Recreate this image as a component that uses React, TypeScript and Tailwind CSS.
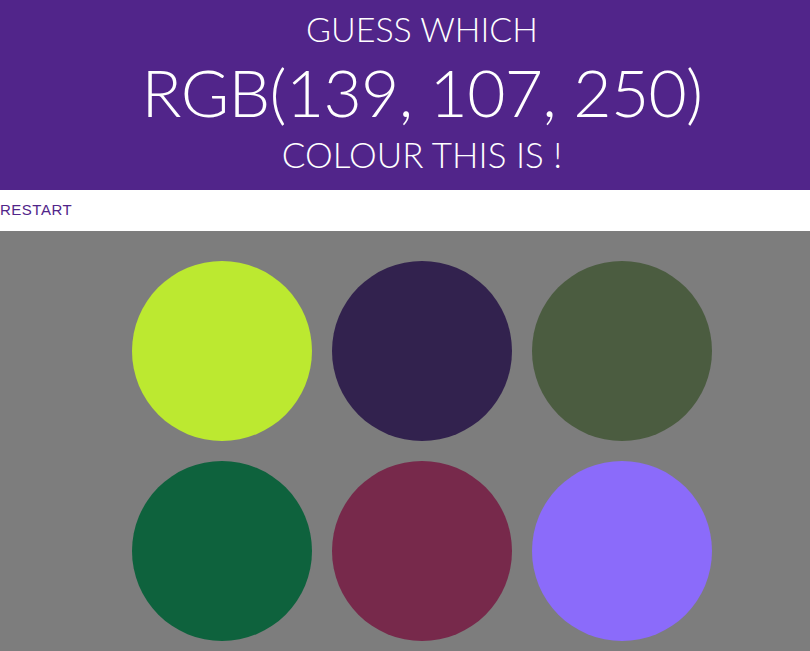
const colours = ['#bce930', '#32224e', '#4b5c40', '#0e623d', '#77294b', '#8b6bfa'];

export default function App() {
  return (
    <div className="min-h-screen bg-[#7d7d7d]">
      <header className="bg-[#51258a] h-[190px] pl-[34px] flex flex-col items-center text-white font-['Lato',sans-serif] font-light">
        <h2 className="text-[34px] leading-none mt-[12px]">GUESS WHICH</h2>
        <h1 className="text-[66px] leading-none mt-[13px] tracking-[-0.7px]">RGB(139, 107, 250)</h1>
        <h2 className="text-[35px] leading-none mt-[12px]">COLOUR THIS IS !</h2>
      </header>
      <div className="bg-white h-[41px] flex items-center">
        <button className="text-[#51258a] text-[15px] font-['Liberation_Sans',sans-serif] tracking-[0.5px] px-0">
          RESTART
        </button>
      </div>
      <div className="pt-[30px] pl-[132px] grid grid-cols-[repeat(3,180px)] gap-[20px]">
        {colours.map((c, i) => (
          <div key={i} className="w-[180px] h-[180px] rounded-full" style={{ backgroundColor: c }} />
        ))}
      </div>
    </div>
  );
}
